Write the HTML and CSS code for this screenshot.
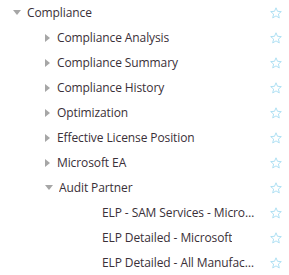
FILE: index.html
```html
<!DOCTYPE html>
<html>
<head>
<meta charset="utf-8">
<link rel="stylesheet" href="styles.css">
</head>
<body>
<ul class="tree">
  <li class="row lvl0"><span class="tw open"></span><span class="label">Compliance</span><svg class="star" viewBox="0 0 12 12"><path d="M6 0.8 L7.5 4.3 L11.3 4.6 L8.4 7.1 L9.3 10.9 L6 8.9 L2.7 10.9 L3.6 7.1 L0.7 4.6 L4.5 4.3 Z"/></svg></li>
  <li class="row lvl1"><span class="tw"></span><span class="label">Compliance Analysis</span><svg class="star" viewBox="0 0 12 12"><path d="M6 0.8 L7.5 4.3 L11.3 4.6 L8.4 7.1 L9.3 10.9 L6 8.9 L2.7 10.9 L3.6 7.1 L0.7 4.6 L4.5 4.3 Z"/></svg></li>
  <li class="row lvl1"><span class="tw"></span><span class="label">Compliance Summary</span><svg class="star" viewBox="0 0 12 12"><path d="M6 0.8 L7.5 4.3 L11.3 4.6 L8.4 7.1 L9.3 10.9 L6 8.9 L2.7 10.9 L3.6 7.1 L0.7 4.6 L4.5 4.3 Z"/></svg></li>
  <li class="row lvl1"><span class="tw"></span><span class="label">Compliance History</span><svg class="star" viewBox="0 0 12 12"><path d="M6 0.8 L7.5 4.3 L11.3 4.6 L8.4 7.1 L9.3 10.9 L6 8.9 L2.7 10.9 L3.6 7.1 L0.7 4.6 L4.5 4.3 Z"/></svg></li>
  <li class="row lvl1"><span class="tw"></span><span class="label">Optimization</span><svg class="star" viewBox="0 0 12 12"><path d="M6 0.8 L7.5 4.3 L11.3 4.6 L8.4 7.1 L9.3 10.9 L6 8.9 L2.7 10.9 L3.6 7.1 L0.7 4.6 L4.5 4.3 Z"/></svg></li>
  <li class="row lvl1"><span class="tw"></span><span class="label">Effective License Position</span><svg class="star" viewBox="0 0 12 12"><path d="M6 0.8 L7.5 4.3 L11.3 4.6 L8.4 7.1 L9.3 10.9 L6 8.9 L2.7 10.9 L3.6 7.1 L0.7 4.6 L4.5 4.3 Z"/></svg></li>
  <li class="row lvl1"><span class="tw"></span><span class="label">Microsoft EA</span><svg class="star" viewBox="0 0 12 12"><path d="M6 0.8 L7.5 4.3 L11.3 4.6 L8.4 7.1 L9.3 10.9 L6 8.9 L2.7 10.9 L3.6 7.1 L0.7 4.6 L4.5 4.3 Z"/></svg></li>
  <li class="row lvl1"><span class="tw open"></span><span class="label">Audit Partner</span><svg class="star" viewBox="0 0 12 12"><path d="M6 0.8 L7.5 4.3 L11.3 4.6 L8.4 7.1 L9.3 10.9 L6 8.9 L2.7 10.9 L3.6 7.1 L0.7 4.6 L4.5 4.3 Z"/></svg></li>
  <li class="row lvl2"><span class="label">ELP - SAM Services - Microsoft</span><svg class="star" viewBox="0 0 12 12"><path d="M6 0.8 L7.5 4.3 L11.3 4.6 L8.4 7.1 L9.3 10.9 L6 8.9 L2.7 10.9 L3.6 7.1 L0.7 4.6 L4.5 4.3 Z"/></svg></li>
  <li class="row lvl2"><span class="label">ELP Detailed - Microsoft</span><svg class="star" viewBox="0 0 12 12"><path d="M6 0.8 L7.5 4.3 L11.3 4.6 L8.4 7.1 L9.3 10.9 L6 8.9 L2.7 10.9 L3.6 7.1 L0.7 4.6 L4.5 4.3 Z"/></svg></li>
  <li class="row lvl2"><span class="label">ELP Detailed - All Manufacturers</span><svg class="star" viewBox="0 0 12 12"><path d="M6 0.8 L7.5 4.3 L11.3 4.6 L8.4 7.1 L9.3 10.9 L6 8.9 L2.7 10.9 L3.6 7.1 L0.7 4.6 L4.5 4.3 Z"/></svg></li>
</ul>
</body>
</html>
```
FILE: styles.css
```css
html, body { margin: 0; padding: 0; background: #fff; }
.tree {
  list-style: none; margin: 0; padding: 0;
  font-family: "Open Sans", "Noto Sans", sans-serif;
  font-size: 12px; color: #3a3038; letter-spacing: -0.1px;
}
.row { display: flex; align-items: center; height: 25px; padding-right: 7px; }
.lvl0 { padding-left: 13px; }
.lvl1 { padding-left: 45px; }
.lvl2 { padding-left: 102px; }
.tw { width: 0; height: 0; margin-right: 7px; flex: none;
  border-top: 4px solid transparent; border-bottom: 4px solid transparent;
  border-left: 5px solid #a6a6a6; }
.tw.open { border-left: 4px solid transparent; border-right: 4px solid transparent;
  border-top: 5px solid #a6a6a6; border-bottom: 0; margin-right: 6px; }
.label { flex: 1; min-width: 0; white-space: nowrap; overflow: hidden; text-overflow: ellipsis; }
.lvl2 .label { flex: 0 1 auto; max-width: 156px; margin-right: auto; }
.star { width: 12px; height: 12px; flex: none; margin-left: 8px;
  fill: none; stroke: #a6dcf2; stroke-width: 0.9; stroke-linejoin: round; }
```
